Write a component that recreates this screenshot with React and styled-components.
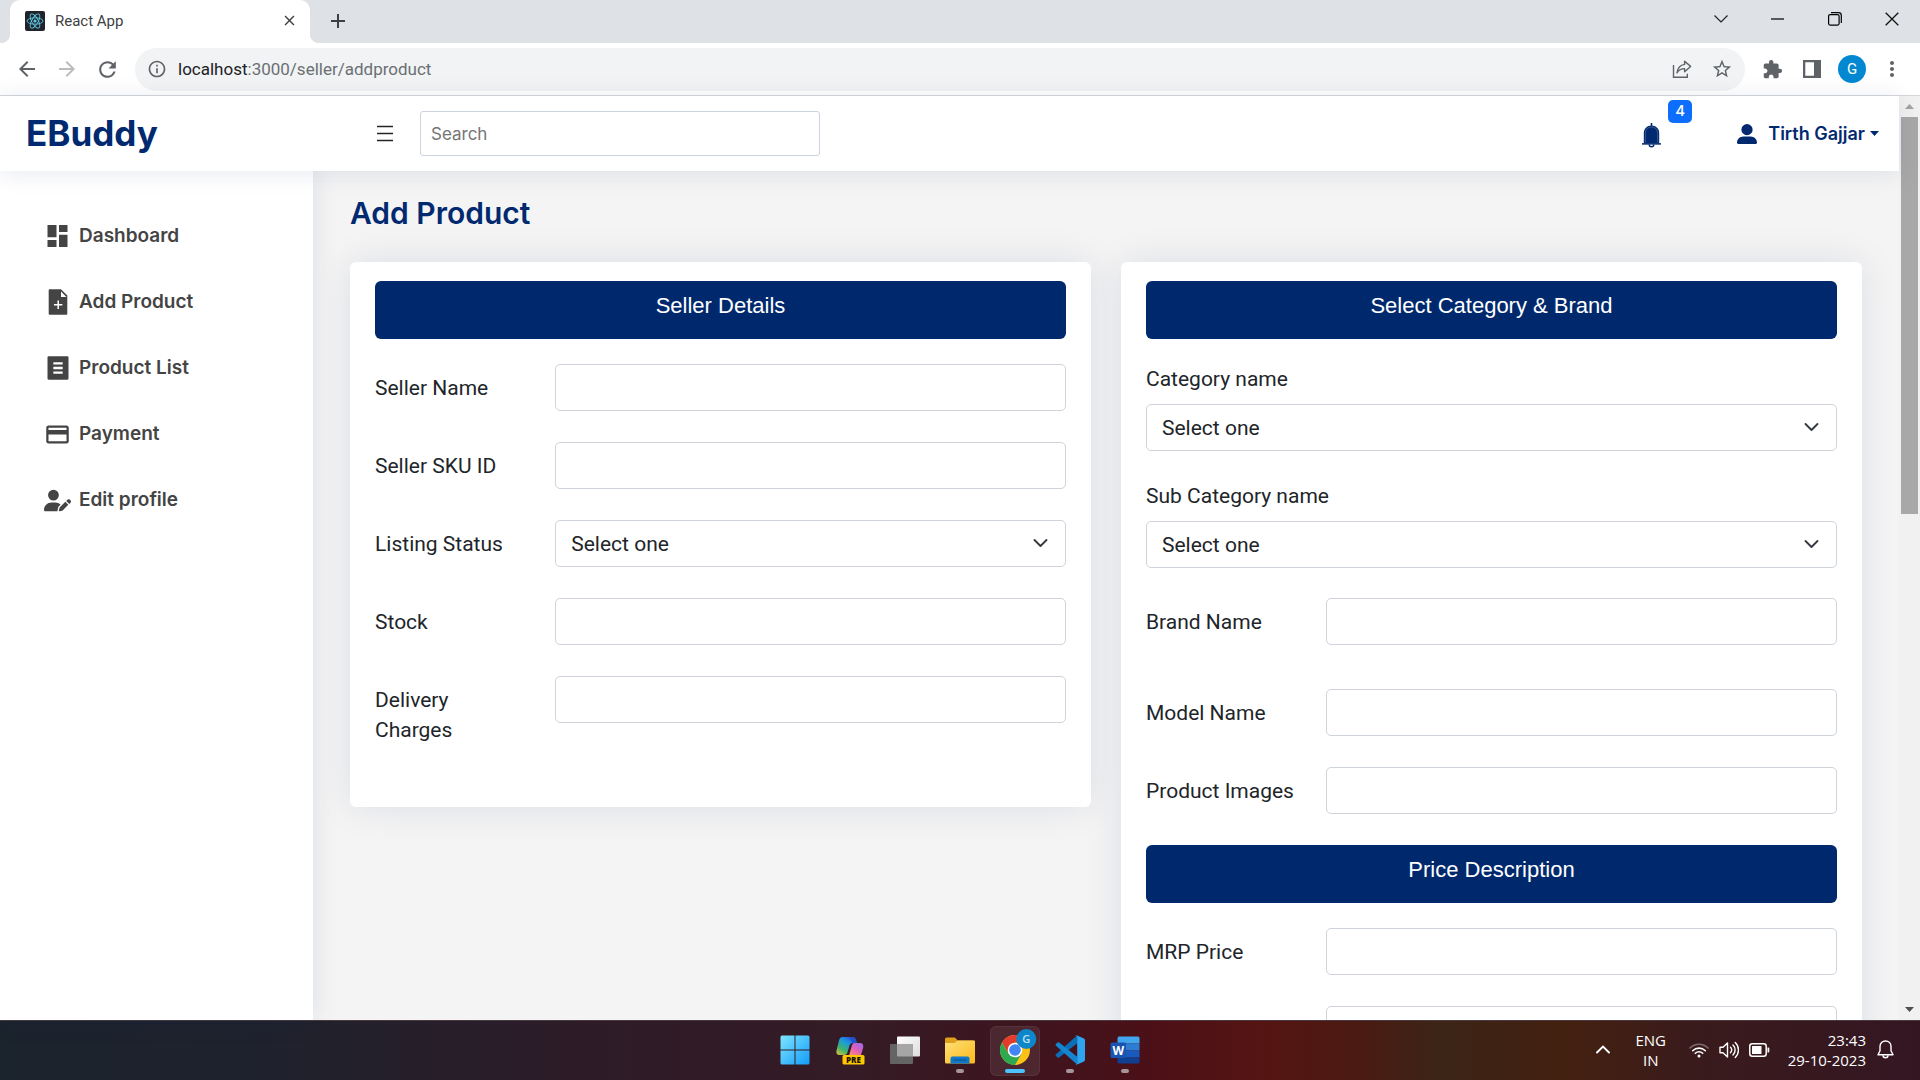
import React, { useId } from 'react';
import styled, { createGlobalStyle, css } from 'styled-components';
import {
  MdArrowBack,
  MdArrowForward,
  MdClose,
  MdAdd,
  MdExtension,
  MdInfoOutline,
  MdMoreVert,
  MdPayment,
  MdRefresh,
  MdStarBorder,
} from 'react-icons/md';
import { RiFileListFill } from 'react-icons/ri';
import { FaUserPen, FaUserLarge } from 'react-icons/fa6';

const navy = '#012970';
const uiFont = 'Roboto, "Open Sans", sans-serif';
const headingFont = 'Inter, Roboto, sans-serif';
const systemFont = '"Open Sans", "Noto Sans", sans-serif';

const GlobalStyle = createGlobalStyle`
  *, *::before, *::after { box-sizing: border-box; }
  body { margin: 0; font-family: ${uiFont}; color: #212529; }
  button { padding: 0; border: 0; background: none; color: inherit; font: inherit; cursor: pointer; }
  svg { display: block; flex: none; }
`;

const Screen = styled.div`
  display: flex;
  flex-direction: column;
  height: 100vh;
  overflow: hidden;
`;

/* ---------- browser ---------- */

const TabStrip = styled.div`
  display: flex;
  align-items: flex-start;
  height: 43px;
  flex: none;
  background: #dee1e6;
`;

const Flare = styled.span`
  align-self: flex-end;
  width: 10px;
  height: 10px;
  background: radial-gradient(circle at ${(p) => (p.$side === 'left' ? '0 0' : '100% 0')}, #dee1e6 10px, #fff 11px);
`;

const Tab = styled.div`
  display: flex;
  align-items: center;
  gap: 10px;
  width: 300px;
  height: 43px;
  padding: 0 12px 2px 15px;
  background: #fff;
  border-radius: 10px 10px 0 0;
  font-size: 15px;
  color: #3c4043;

  span { flex: 1; }
`;

const NewTab = styled.button`
  display: grid;
  place-items: center;
  width: 35px;
  height: 42px;
  color: #3c4043;
`;

const WindowControls = styled.div`
  display: flex;
  margin-left: auto;
`;

const WindowButton = styled.button`
  display: grid;
  place-items: center;
  width: 57px;
  height: 37px;
`;

const Toolbar = styled.div`
  display: flex;
  align-items: center;
  flex: none;
  height: 53px;
  padding: 0 8px 0 7px;
  background: #fff;
  border-bottom: 1px solid #d5d7da;
  color: #5f6368;
`;

const ToolButton = styled.button`
  display: grid;
  place-items: center;
  flex: none;
  width: 40px;
  height: 40px;
  color: ${(p) => (p.$faded ? '#babcbe' : '#5f6368')};
`;

const AddressBar = styled.div`
  display: flex;
  align-items: center;
  flex: 1;
  height: 43px;
  margin: 0 7px 0 8px;
  padding: 0 3px 0 12px;
  border-radius: 22px;
  background: #f1f3f4;
`;

const Url = styled.p`
  flex: 1;
  margin: 0 0 0 11px;
  font-size: 17px;
  color: #6b6f73;

  b { font-weight: 400; color: #202124; }
`;

const Avatar = styled.span`
  display: grid;
  place-items: center;
  width: 28px;
  height: 28px;
  border-radius: 50%;
  background: #0288d1;
  color: #fff;
  font-size: 15px;
`;

/* ---------- page ---------- */

const Viewport = styled.div`
  display: flex;
  flex: 1;
  min-height: 0;
`;

const Page = styled.div`
  display: flex;
  flex-direction: column;
  flex: 1;
  min-width: 0;
  background: #f4f4f4;
`;

const PageHeader = styled.header`
  position: relative;
  z-index: 2;
  display: flex;
  align-items: center;
  flex: none;
  height: 75px;
  padding: 0 20px 0 26px;
  background: #fff;
  box-shadow: 0 2px 25px rgba(1, 41, 112, 0.1);
  color: ${navy};
`;

const Logo = styled.a`
  width: 350px;
  padding-bottom: 2px;
  font: 700 35px/40px ${headingFont};
  color: ${navy};
  text-decoration: none;
`;

const MenuButton = styled.button`
  margin-right: 26px;
  color: #212529;
`;

const SearchInput = styled.input`
  width: 400px;
  height: 45px;
  padding: 0 10px;
  border: 1px solid #cdd4e0;
  border-radius: 3px;
  font: 400 17px ${headingFont};

  &::placeholder { color: #757575; }
`;

const BellButton = styled.button`
  position: relative;
  margin-left: auto;
  margin-right: 76px;
  padding-top: 4px;
`;

const Badge = styled.span`
  position: absolute;
  left: 26px;
  bottom: 25px;
  width: 24px;
  height: 23px;
  border-radius: 5px;
  background: #0d6efd;
  color: #fff;
  font: 500 15px/22px ${headingFont};
  text-align: center;
`;

const Profile = styled.button`
  display: flex;
  align-items: center;
  gap: 11px;
  font: 600 18px ${headingFont};
`;

const NameWithCaret = styled.span`
  display: flex;
  align-items: center;
  gap: 5px;
`;

const Body = styled.div`
  display: flex;
  flex: 1;
  min-height: 0;
`;

const Sidebar = styled.nav`
  position: relative;
  z-index: 1;
  flex: none;
  width: 313px;
  padding: 50px 44px;
  background: #fff;
  box-shadow: 0 0 25px rgba(1, 41, 112, 0.1);
`;

const NavList = styled.ul`
  display: grid;
  gap: 36px;
  margin: 0;
  padding: 0;
  list-style: none;
`;

const NavLink = styled.a`
  display: grid;
  grid-template-columns: 27px 1fr;
  align-items: center;
  gap: 8px;
  height: 30px;
  font: 600 19px/30px ${headingFont};
  color: #444;
  text-decoration: none;

  svg { justify-self: center; }
`;

const Content = styled.main`
  flex: 1;
  min-width: 0;
  padding: 24px 37px;
  overflow: auto;
  scrollbar-width: none;
`;

const Title = styled.h1`
  margin: 0 0 31px;
  font: 600 30px/36px ${headingFont};
  color: ${navy};
`;

const Columns = styled.div`
  display: grid;
  grid-template-columns: 1fr 1fr;
  align-items: start;
  gap: 30px;
`;

const Card = styled.section`
  padding: 19px 25px 53px;
  border-radius: 6px;
  background: #fff;
  box-shadow: 0 0 37px rgba(1, 41, 112, 0.1);
`;

const Banner = styled.h2`
  margin: 0 0 25px;
  padding: 10px 0 18px;
  border-radius: 6px;
  background: #00296d;
  color: #fff;
  font: 400 22px/30px "Liberation Sans", sans-serif;
  text-align: center;
`;

const Fields = styled.div`
  display: grid;
  gap: 30px;
  margin-bottom: ${(p) => (p.$last ? 0 : 30)}px;
`;

const Row = styled.div`
  display: grid;
  grid-template-columns: 1fr 3fr;
  column-gap: 10px;
  margin-bottom: ${(p) => (p.$loose ? 13 : 0)}px;
`;

const Stack = styled.div`
  display: grid;
  gap: 10px;
`;

const Label = styled.label`
  font-size: 21px;
  line-height: 30px;
  ${(p) => p.$inline && css`padding: 9px 20px 9px 0;`}
`;

const control = css`
  width: 100%;
  height: 47px;
  padding: 0 15px;
  border: 1px solid #ced4da;
  border-radius: 5px;
  background: #fff;
  color: #212529;
  font: 400 21px ${uiFont};
`;

const TextInput = styled.input`
  ${control}
  grid-column: -2;
`;

const SelectBox = styled.div`
  position: relative;
  height: 47px;

  svg {
    position: absolute;
    top: 15px;
    right: 18px;
    pointer-events: none;
  }
`;

const Select = styled.select`
  ${control}
  appearance: none;
`;

const ScrollTrack = styled.div`
  display: flex;
  flex-direction: column;
  align-items: center;
  flex: none;
  width: 21px;
  background: #f1f1f1;
`;

const ScrollArrow = styled.button`
  display: grid;
  place-items: center;
  width: 21px;
  height: 21px;
`;

const ScrollThumb = styled.div`
  width: 17px;
  height: 43%;
  margin-bottom: auto;
  background: #a8a8a8;
`;

/* ---------- taskbar ---------- */

const Taskbar = styled.footer`
  display: grid;
  grid-template-columns: 1fr auto 1fr;
  align-items: center;
  flex: none;
  height: 60px;
  border-top: 1px solid #4a3a40;
  background: linear-gradient(90deg, #1b232d 0%, #1f222d 14%, #2d1c28 30%, #351b25 45%, #3d151f 53%, #4c1017 60%, #541512 66%, #4a1a12 71%, #3c2517 75%, #432010 82%, #3a1b1c 88%, #341623 100%);
  color: #fff;
  font-family: ${systemFont};
`;

const Apps = styled.div`
  grid-column: 2;
  display: flex;
  gap: 5px;
`;

const AppButton = styled.button`
  display: flex;
  flex-direction: column;
  align-items: center;
  width: 50px;
  height: 50px;
  padding-top: 9px;
  border-radius: 6px;
  ${(p) => p.$active && css`
    background: rgba(255, 255, 255, 0.08);
    box-shadow: inset 0 0 0 1px rgba(255, 255, 255, 0.06);
  `}

  &::after {
    content: '';
    width: ${(p) => (p.$active ? 20 : 8)}px;
    height: 4px;
    margin-top: 4px;
    border-radius: 2px;
    background: ${(p) => (p.$active ? '#4cc2ff' : p.$running ? '#a8959b' : 'transparent')};
  }
`;

const Tray = styled.div`
  display: flex;
  align-items: center;
  justify-content: flex-end;
  padding: 0 26px 2px 0;
  font-size: 15px;
  line-height: 20px;
`;

const Language = styled.button`
  width: 40px;
  margin: 0 18px 0 21px;
`;

const StatusGroup = styled.button`
  display: flex;
  align-items: center;
  gap: 10px;
  margin-right: 18px;
`;

const Clock = styled.time`
  margin-right: 11px;
  text-align: right;
`;

/* ---------- drawings ---------- */

const ReactLogo = () => (
  <svg width="20" height="20" viewBox="0 0 20 20" fill="none" stroke="#5cc9e4" strokeWidth="0.9">
    <rect width="20" height="20" rx="2" fill="#20232a" stroke="none" />
    <ellipse cx="10" cy="10" rx="8" ry="3.2" />
    <ellipse cx="10" cy="10" rx="8" ry="3.2" transform="rotate(60 10 10)" />
    <ellipse cx="10" cy="10" rx="8" ry="3.2" transform="rotate(120 10 10)" />
    <circle cx="10" cy="10" r="1.6" fill="#5cc9e4" stroke="none" />
  </svg>
);

const ShareIcon = () => (
  <svg width="20" height="20" viewBox="0 0 20 20" fill="none" stroke="#5f6368" strokeWidth="1.4">
    <path d="M1.5 6v12.3h13.8v-3.5" />
    <path d="M12.6 2.2l6 5.2-6 5.3V9.6c-3.6 0-6 1.2-7.6 4.2.6-4.6 3.4-7.8 7.6-8.4z" strokeLinejoin="round" />
  </svg>
);

const PanelIcon = () => (
  <svg width="18" height="18" viewBox="0 0 18 18" fill="#5f6368">
    <path fillRule="evenodd" d="M0 0h18v18H0zM2.3 2.3v13.4h8.7V2.3z" />
  </svg>
);

const HamburgerIcon = () => (
  <svg width="18" height="17" viewBox="0 0 18 17" fill="none" stroke="currentColor" strokeWidth="1.7">
    <path d="M1 1.5h16M1 8.500h16M1 15.500h16" />
  </svg>
);

const BellIcon = () => (
  <svg width="19" height="25" viewBox="0 0 19 25" fill="none">
    <path d="M9.5 0.5v3" stroke={navy} strokeWidth="1.6" strokeLinecap="round" />
    <path d="M1.8 20.5V10.2C1.8 5.5 5 2.4 9.5 2.4s7.7 3.1 7.7 7.8v10.3z" fill={navy} />
    <path d="M3.4 19.5V10.4C3.4 6.5 6 4 9.500 4s6.100 2.500 6.100 6.400v9.100" stroke="#5d78a8" strokeWidth="0.6" />
    <path d="M0 20.9h19" stroke={navy} strokeWidth="1.5" />
    <path d="M7.2 21.5a2.3 2.3 0 0 0 4.6 0" stroke={navy} strokeWidth="1.5" />
  </svg>
);

const DashboardIcon = () => (
  <svg width="21" height="22" viewBox="0 0 21 22" fill="currentColor">
    <path d="M0.5 0h9v12.300h-9zM0.500 15h9v7h-9zM12 0h8.500v7H12zM12 9.700h8.500V22H12z" />
  </svg>
);

const FileAddIcon = () => (
  <svg width="20" height="26" viewBox="0 0 20 26" fill="none">
    <path d="M1.2 0.3H13L19.3 6.6V24.7a1 1 0 0 1-1 1H1.7a1 1 0 0 1-1-1V0.9z" fill="currentColor" />
    <path d="M13 2.6V8h5.4z" fill="#fff" />
    <path d="M10.2 11.6v8.4M6 15.8h8.4" stroke="#fff" strokeWidth="1.5" />
  </svg>
);

const Chevron = () => (
  <svg width="15" height="16" viewBox="0 0 15 16" fill="none" stroke="#343a40" strokeWidth="1.9" strokeLinecap="round" strokeLinejoin="round">
    <path d="M1.5 5l6 6 6-6" />
  </svg>
);

const WindowsLogo = () => (
  <svg width="30" height="30" viewBox="0 0 30 30">
    <defs>
      <linearGradient id="win" x1="0" y1="0" x2="1" y2="1">
        <stop offset="0" stopColor="#7fe6ff" />
        <stop offset="1" stopColor="#129cf8" />
      </linearGradient>
    </defs>
    <path fill="url(#win)" d="M2 .5h12.500v14H.5V2A1.500 1.500 0 0 1 2 .5zM15.500.5H28A1.500 1.500 0 0 1 29.500 2v12.500h-14zM.5 15.500h14v14H2A1.500 1.500 0 0 1 .5 28zM15.500 15.500h14V28a1.500 1.500 0 0 1-1.500 1.500H15.500z" />
  </svg>
);

const CopilotLogo = () => (
  <svg width="30" height="30" viewBox="0 0 30 30">
    <defs>
      <linearGradient id="copA" x1="0" y1="1" x2="0.7" y2="0">
        <stop offset="0" stopColor="#e8c33a" />
        <stop offset="0.35" stopColor="#3fb36b" />
        <stop offset="0.7" stopColor="#1a9be0" />
        <stop offset="1" stopColor="#2456d6" />
      </linearGradient>
      <linearGradient id="copB" x1="1" y1="0" x2="0.2" y2="1">
        <stop offset="0" stopColor="#9a6bf0" />
        <stop offset="0.5" stopColor="#e05fb8" />
        <stop offset="1" stopColor="#ff9a5c" />
      </linearGradient>
    </defs>
    <path fill="url(#copA)" d="M7.5 2h10c2 0 3 1.2 3.5 3l.8 3h-4c-2 0-3 1.2-3.5 3l-1.7 6c-.5 2-1.5 3-3.5 3H4.5c-2.500 0-3.700-2-3-4.500l2.500-10C4.600 3.300 5.700 2 7.500 2z" />
    <path fill="#2450cf" d="M14 2h3.5c2 0 3 1.2 3.5 3l.8 3h-4L15.5 4.5z" />
    <path fill="url(#copB)" d="M18.5 8H25c2.5 0 3.8 2 3.2 4.5L26.3 19c-.6 1.8-1.7 3-3.5 3H11c2 0 3-1.2 3.5-3L17 10z" />
    <rect x="7.500" y="20" width="22" height="9.5" rx="1.5" fill="#ffc800" />
    <text x="18.5" y="27.6" fontFamily="Open Sans, sans-serif" fontWeight="800" fontSize="8" textAnchor="middle" fill="#1c1400">PRE</text>
  </svg>
);

const TaskViewLogo = () => (
  <svg width="30" height="30" viewBox="0 0 30 30">
    <defs>
      <linearGradient id="tv" x1="0" y1="0" x2="1" y2="1">
        <stop offset="0" stopColor="#fff" />
        <stop offset="1" stopColor="#dcdcdc" />
      </linearGradient>
    </defs>
    <rect x="7" y="1.5" width="23" height="20" rx="1" fill="url(#tv)" />
    <rect x="0" y="9" width="23" height="20" rx="1" fill="#646464" />
    <path d="M7 9h16v12.5H8a1 1 0 0 1-1-1z" fill="#a6a6a6" />
  </svg>
);

const FolderLogo = () => (
  <svg width="30" height="30" viewBox="0 0 30 30">
    <defs>
      <linearGradient id="fold" x1="0" y1="0" x2="1" y2="1">
        <stop offset="0" stopColor="#ffdf7a" />
        <stop offset="1" stopColor="#fbb917" />
      </linearGradient>
    </defs>
    <path fill="#e0a11a" d="M1.5 2.5h8.3l3 3H28a2 2 0 0 1 2 2V12H0V4a1.5 1.5 0 0 1 1.5-1.5z" />
    <path fill="url(#fold)" d="M0 8h9.5l3.3-2.5H29a1 1 0 0 1 1 1V27a1.5 1.5 0 0 1-1.5 1.500h-27A1.500 1.500 0 0 1 0 27z" />
    <path fill="#1078c8" d="M5.5 28.5V23.5a2 2 0 0 1 2-2h15a2 2 0 0 1 2 2v5z" />
    <path stroke="#0a4c8c" strokeWidth="1.2" strokeLinecap="round" d="M9 25h12" />
  </svg>
);

const ChromeLogo = () => (
  <svg width="36" height="30" viewBox="-3 0 36 30" overflow="visible">
    <circle cx="15" cy="15" r="15" fill="#fbc116" />
    <path fill="#e33b2e" d="M2 7.5A15 15 0 0 1 28 7.5H15L8.5 18.7z" />
    <path fill="#2da94f" d="M2 7.5A15 15 0 0 0 15 30l6.5-11.2L8.5 18.7z" />
    <circle cx="15" cy="15" r="7.3" fill="#fff" />
    <circle cx="15" cy="15" r="5.8" fill="#4285f4" />
    <circle cx="26.3" cy="4" r="10" fill="#0d87c9" />
    <text x="26.3" y="8" fontFamily="Open Sans, sans-serif" fontWeight="600" fontSize="11" textAnchor="middle" fill="#bfe3f5">G</text>
  </svg>
);

const CodeLogo = () => (
  <svg width="30" height="30" viewBox="0 0 30 30">
    <path fill="#0a6fb8" d="M22 0.5L1 19.3c-.6.5-.6 1.2 0 1.7l1.6 1.5c.5.4 1 .4 1.5 0L22.5 8z" />
    <path fill="#1485d1" d="M22 29.5L1 10.7c-.6-.5-.6-1.2 0-1.7l1.6-1.5c.5-.4 1-.4 1.5 0L22.5 22z" />
    <path fill="#2da5f0" d="M22 0.4l6.5 2.9c1 .5 1.5 1.2 1.5 2.2v19c0 1-.5 1.7-1.5 2.2L22 29.6c-.8.2-1.3 0-1.8-.6.9.5 2 .2 2-1.2V2.2c0-1.4-1.1-1.7-2-1.2.5-.6 1-.8 1.8-.6z" />
  </svg>
);

const WordLogo = () => (
  <svg width="30" height="30" viewBox="0 0 30 30">
    <path fill="#41a5ee" d="M8.5 1.5H28A1.5 1.5 0 0 1 29.5 3v5.5h-22V3z" />
    <path fill="#2b7cd3" d="M7.5 8.5h22v7h-22z" />
    <path fill="#185abd" d="M7.5 15.5h22v7h-22z" />
    <path fill="#103f91" d="M7.5 22.5h22V27a1.5 1.5 0 0 1-1.5 1.5H9A1.5 1.5 0 0 1 7.5 27z" />
    <rect x="0.5" y="7.5" width="15.5" height="15.5" rx="1.5" fill="#1a53b0" />
    <text x="8.2" y="19.7" fontFamily="Open Sans, sans-serif" fontWeight="700" fontSize="12" textAnchor="middle" fill="#fff">W</text>
  </svg>
);

const TrayChevron = () => (
  <svg width="14" height="9" viewBox="0 0 14 9" fill="none" stroke="#fff" strokeWidth="1.9" strokeLinecap="round">
    <path d="M1 7.5l6-6 6 6" />
  </svg>
);

const WifiIcon = () => (
  <svg width="20" height="16" viewBox="0 0 20 16" fill="none" stroke="#fff" strokeWidth="1.6" strokeLinecap="round">
    <path d="M1 6a12.7 12.7 0 0 1 18 0" opacity="0.35" />
    <path d="M3.7 8.7a9 9 0 0 1 12.6 0M6.3 11.3a5.3 5.3 0 0 1 7.4 0" />
    <circle cx="10" cy="14" r="1.5" fill="#fff" stroke="none" />
  </svg>
);

const SpeakerIcon = () => (
  <svg width="20" height="18" viewBox="0 0 20 18" fill="none" stroke="#fff" strokeWidth="1.4" strokeLinecap="round" strokeLinejoin="round">
    <path d="M1 6.2h3L8.5 2v14L4 11.8H1z" />
    <path d="M11.5 6.3a4 4 0 0 1 0 5.4M14 4a7 7 0 0 1 0 10M16.3 1.5a10.5 10.5 0 0 1 0 15" />
  </svg>
);

const BatteryIcon = () => (
  <svg width="21" height="14" viewBox="0 0 21 14" fill="none">
    <rect x="0.8" y="0.8" width="16.4" height="12.4" rx="2.5" stroke="#fff" strokeWidth="1.5" />
    <rect x="3" y="3" width="9.5" height="8" rx="0.5" fill="#fff" />
    <path d="M18.5 4.5h.8a1 1 0 0 1 1 1v3a1 1 0 0 1-1 1h-.8z" fill="#fff" />
  </svg>
);

const TrayBell = () => (
  <svg width="17" height="19" viewBox="0 0 17 19" fill="none" stroke="#fff" strokeWidth="1.4" strokeLinejoin="round">
    <path d="M8.5 1C5.3 1 3 3.3 3 6.5v4.3L1 14.8h15l-2-4V6.5C14 3.3 11.7 1 8.5 1z" />
    <path d="M6 15.2a2.5 2.5 0 0 0 5 0" />
  </svg>
);

/* ---------- parts ---------- */

const links = [
  { label: 'Dashboard', icon: <DashboardIcon /> },
  { label: 'Add Product', icon: <FileAddIcon /> },
  { label: 'Product List', icon: <RiFileListFill size={28} /> },
  { label: 'Payment', icon: <MdPayment size={27} /> },
  { label: 'Edit profile', icon: <FaUserPen size={27} /> },
];

const apps = [
  { name: 'Start', logo: <WindowsLogo /> },
  { name: 'Copilot', logo: <CopilotLogo /> },
  { name: 'Task view', logo: <TaskViewLogo /> },
  { name: 'File Explorer', logo: <FolderLogo />, running: true },
  { name: 'Chrome', logo: <ChromeLogo />, active: true },
  { name: 'Visual Studio Code', logo: <CodeLogo />, running: true },
  { name: 'Word', logo: <WordLogo />, running: true },
];

function Dropdown({ id }) {
  return (
    <SelectBox>
      <Select id={id}>
        <option>Select one</option>
      </Select>
      <Chevron />
    </SelectBox>
  );
}

function Field({ label, select, stacked, loose }) {
  const id = useId();
  const input = select ? <Dropdown id={id} /> : <TextInput id={id} type="text" />;
  if (stacked) {
    return (
      <Stack>
        <Label htmlFor={id}>{label}</Label>
        {input}
      </Stack>
    );
  }
  return (
    <Row $loose={loose}>
      <Label htmlFor={id} $inline>{label}</Label>
      {input}
    </Row>
  );
}

function Browser() {
  return (
    <>
      <TabStrip>
        <Flare $side="left" />
        <Tab>
          <ReactLogo />
          <span>React App</span>
          <button aria-label="Close tab"><MdClose size={17} color="#3c4043" /></button>
        </Tab>
        <Flare $side="right" />
        <NewTab aria-label="New tab"><MdAdd size={24} /></NewTab>
        <WindowControls>
          <WindowButton aria-label="Search tabs">
            <svg width="14" height="8" fill="none" stroke="#222" strokeWidth="1.2"><path d="M.5.5l6.5 6.5L13.5.5" /></svg>
          </WindowButton>
          <WindowButton aria-label="Minimize">
            <svg width="13" height="2"><path d="M0 1h13" stroke="#000" strokeWidth="1.2" /></svg>
          </WindowButton>
          <WindowButton aria-label="Restore">
            <svg width="14" height="14" fill="none" stroke="#000" strokeWidth="1.2">
              <rect x="0.6" y="2.6" width="10.5" height="10.5" rx="1.5" />
              <path d="M3 .7h7.5A2.8 2.8 0 0 1 13.3 3.5V11" />
            </svg>
          </WindowButton>
          <WindowButton aria-label="Close">
            <svg width="14" height="14" stroke="#111" strokeWidth="1.3"><path d="M.7.7l12.6 12.6M13.3.7L.7 13.3" /></svg>
          </WindowButton>
        </WindowControls>
      </TabStrip>
      <Toolbar>
        <ToolButton aria-label="Back"><MdArrowBack size={24} /></ToolButton>
        <ToolButton aria-label="Forward" $faded><MdArrowForward size={24} /></ToolButton>
        <ToolButton aria-label="Reload"><MdRefresh size={25} /></ToolButton>
        <AddressBar>
          <MdInfoOutline size={20} />
          <Url><b>localhost</b>:3000/seller/addproduct</Url>
          <ToolButton aria-label="Share"><ShareIcon /></ToolButton>
          <ToolButton aria-label="Bookmark"><MdStarBorder size={22} /></ToolButton>
        </AddressBar>
        <ToolButton aria-label="Extensions"><MdExtension size={21} /></ToolButton>
        <ToolButton aria-label="Side panel"><PanelIcon /></ToolButton>
        <ToolButton aria-label="Account"><Avatar>G</Avatar></ToolButton>
        <ToolButton aria-label="More"><MdMoreVert size={24} /></ToolButton>
      </Toolbar>
    </>
  );
}

export default function App() {
  return (
    <Screen>
      <GlobalStyle />
      <Browser />
      <Viewport>
        <Page>
          <PageHeader>
            <Logo href="#">EBuddy</Logo>
            <MenuButton aria-label="Toggle menu"><HamburgerIcon /></MenuButton>
            <SearchInput type="search" placeholder="Search" aria-label="Search" />
            <BellButton aria-label="Notifications">
              <BellIcon />
              <Badge>4</Badge>
            </BellButton>
            <Profile>
              <FaUserLarge size={20} />
              <NameWithCaret>
                Tirth Gajjar
                <svg width="9" height="5" fill={navy}><path d="M0 0h9L4.5 5z" /></svg>
              </NameWithCaret>
            </Profile>
          </PageHeader>
          <Body>
            <Sidebar>
              <NavList>
                {links.map(({ label, icon }) => (
                  <li key={label}>
                    <NavLink href="#">
                      {icon}
                      {label}
                    </NavLink>
                  </li>
                ))}
              </NavList>
            </Sidebar>
            <Content>
              <Title>Add Product</Title>
              <Columns>
                <Card>
                  <Banner>Seller Details</Banner>
                  <Fields $last>
                    <Field label="Seller Name" />
                    <Field label="Seller SKU ID" />
                    <Field label="Listing Status" select />
                    <Field label="Stock" />
                    <Field label="Delivery Charges" />
                  </Fields>
                </Card>
                <Card>
                  <Banner>Select Category &amp; Brand</Banner>
                  <Fields>
                    <Field label="Category name" select stacked />
                    <Field label="Sub Category name" select stacked />
                    <Field label="Brand Name" loose />
                    <Field label="Model Name" />
                    <Field label="Product Images" />
                  </Fields>
                  <Banner>Price Description</Banner>
                  <Fields $last>
                    <Field label="MRP Price" />
                    <Row>
                      <TextInput type="text" aria-label="Selling price" />
                    </Row>
                  </Fields>
                </Card>
              </Columns>
            </Content>
          </Body>
        </Page>
        <ScrollTrack>
          <ScrollArrow aria-label="Scroll up">
            <svg width="9" height="5" fill="#a3a3a3"><path d="M0 5h9L4.5 0z" /></svg>
          </ScrollArrow>
          <ScrollThumb />
          <ScrollArrow aria-label="Scroll down">
            <svg width="9" height="5" fill="#505050"><path d="M0 0h9L4.5 5z" /></svg>
          </ScrollArrow>
        </ScrollTrack>
      </Viewport>
      <Taskbar>
        <Apps>
          {apps.map(({ name, logo, running, active }) => (
            <AppButton key={name} aria-label={name} $running={running} $active={active}>
              {logo}
            </AppButton>
          ))}
        </Apps>
        <Tray>
          <button aria-label="Hidden icons"><TrayChevron /></button>
          <Language>ENG<br />IN</Language>
          <StatusGroup aria-label="Network, sound and battery">
            <WifiIcon />
            <SpeakerIcon />
            <BatteryIcon />
          </StatusGroup>
          <Clock>23:43<br />29-10-2023</Clock>
          <button aria-label="Notification centre"><TrayBell /></button>
        </Tray>
      </Taskbar>
    </Screen>
  );
}
